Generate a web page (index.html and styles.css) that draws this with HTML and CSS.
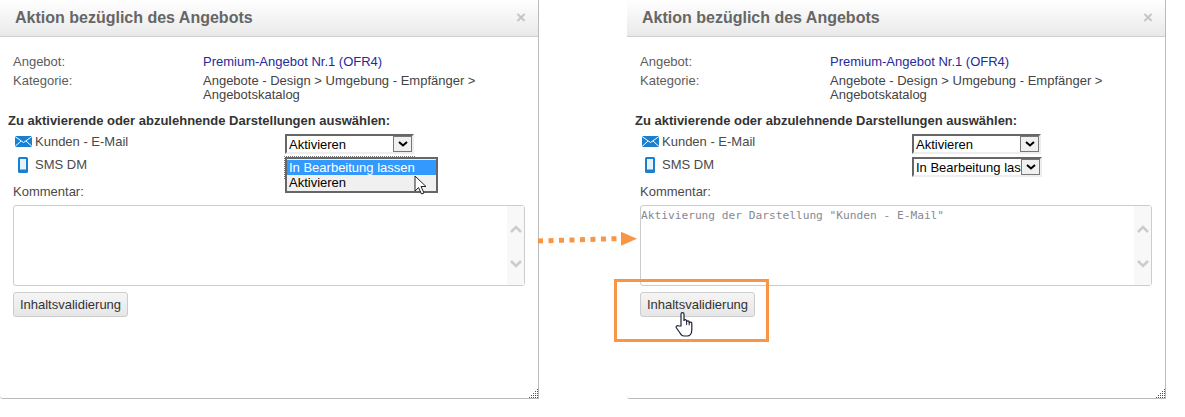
FILE: index.html
```
<!DOCTYPE html>
<html lang="de">
<head>
<meta charset="utf-8">
<title>Aktion bezüglich des Angebots</title>
<link rel="stylesheet" href="styles.css">
</head>
<body>
<main class="stage">
  <section class="dialog dialog-left">
    <header class="dialog-head"><h1>Aktion bezüglich des Angebots</h1><span class="close">×</span></header>
    <div class="dialog-body">
      <dl class="meta">
        <dt>Angebot:</dt><dd class="link">Premium-Angebot Nr.1 (OFR4)</dd>
        <dt>Kategorie:</dt><dd>Angebote - Design &gt; Umgebung - Empfänger &gt;<br>Angebotskatalog</dd>
      </dl>
      <h2>Zu aktivierende oder abzulehnende Darstellungen auswählen:</h2>
      <div class="reps">
        <div class="rep">
          <span class="rep-name"><svg class="ico" width="17" height="11" viewBox="0 0 17 11"><path fill="#1b7fd0" d="M0 0h17v11H0z"/><path fill="none" stroke="#fff" d="M0 .5l8.500 6 8.500-6M0 10.500l6-5.500M17 10.500l-6-5.500"/></svg>Kunden - E-Mail</span>
          <div class="select"><span class="select-value">Aktivieren</span><span class="select-btn"><svg width="10" height="6" viewBox="0 0 10 6"><path fill="none" stroke="#000" stroke-width="2" d="M1 1l4 3.500L9 1"/></svg></span></div>
        </div>
        <div class="rep">
          <span class="rep-name"><svg class="ico phone" width="10" height="16" viewBox="0 0 10 16"><rect width="10" height="16" rx="1.500" fill="#1b7fd0"/><rect x="2" y="2" width="6" height="10.500" fill="#e8f2fa"/></svg>SMS DM</span>
          <div class="dropdown"><div class="opt opt-on">In Bearbeitung lassen</div><div class="opt">Aktivieren</div></div>
        </div>
      </div>
      <label class="comment-label">Kommentar:</label>
      <div class="textarea"><span class="textarea-text"></span><span class="scroll"><svg width="14" height="80" viewBox="0 0 14 80"><path fill="none" stroke="#ccc" stroke-width="2.500" d="M2 26l5-5 5 5M2 55l5 5 5-5"/></svg></span></div>
      <button class="btn">Inhaltsvalidierung</button>
    </div>
    <svg class="grip" width="9" height="9" viewBox="0 0 9 9"><path fill="#555" d="M8 0h1v1H8zM6 2h1v1H6zM8 2h1v1H8zM4 4h1v1H4zM6 4h1v1H6zM8 4h1v1H8zM2 6h1v1H2zM4 6h1v1H4zM6 6h1v1H6zM8 6h1v1H8zM0 8h1v1H0zM2 8h1v1H2zM4 8h1v1H4zM6 8h1v1H6zM8 8h1v1H8z"/></svg>
    <svg class="cursor-arrow" width="14" height="21" viewBox="0 0 14 21"><path fill="#fff" stroke="#222" d="M1 1v15l3.500-3.500 3 6.500 2.500-1-3-6.500h5z"/></svg>
  </section>

  <section class="dialog dialog-right">
    <header class="dialog-head"><h1>Aktion bezüglich des Angebots</h1><span class="close">×</span></header>
    <div class="dialog-body">
      <dl class="meta">
        <dt>Angebot:</dt><dd class="link">Premium-Angebot Nr.1 (OFR4)</dd>
        <dt>Kategorie:</dt><dd>Angebote - Design &gt; Umgebung - Empfänger &gt;<br>Angebotskatalog</dd>
      </dl>
      <h2>Zu aktivierende oder abzulehnende Darstellungen auswählen:</h2>
      <div class="reps">
        <div class="rep">
          <span class="rep-name"><svg class="ico" width="17" height="11" viewBox="0 0 17 11"><path fill="#1b7fd0" d="M0 0h17v11H0z"/><path fill="none" stroke="#fff" d="M0 .5l8.500 6 8.500-6M0 10.500l6-5.500M17 10.500l-6-5.500"/></svg>Kunden - E-Mail</span>
          <div class="select"><span class="select-value">Aktivieren</span><span class="select-btn"><svg width="10" height="6" viewBox="0 0 10 6"><path fill="none" stroke="#000" stroke-width="2" d="M1 1l4 3.500L9 1"/></svg></span></div>
        </div>
        <div class="rep">
          <span class="rep-name"><svg class="ico phone" width="10" height="16" viewBox="0 0 10 16"><rect width="10" height="16" rx="1.500" fill="#1b7fd0"/><rect x="2" y="2" width="6" height="10.500" fill="#e8f2fa"/></svg>SMS DM</span>
          <div class="select select-wide"><span class="select-value">In Bearbeitung lassen</span><span class="select-btn"><svg width="10" height="6" viewBox="0 0 10 6"><path fill="none" stroke="#000" stroke-width="2" d="M1 1l4 3.500L9 1"/></svg></span></div>
        </div>
      </div>
      <label class="comment-label">Kommentar:</label>
      <div class="textarea"><span class="textarea-text">Aktivierung der Darstellung "Kunden - E-Mail"</span><span class="scroll"><svg width="14" height="80" viewBox="0 0 14 80"><path fill="none" stroke="#ccc" stroke-width="2.500" d="M2 26l5-5 5 5M2 55l5 5 5-5"/></svg></span></div>
      <button class="btn">Inhaltsvalidierung</button>
    </div>
    <svg class="grip" width="9" height="9" viewBox="0 0 9 9"><path fill="#555" d="M8 0h1v1H8zM6 2h1v1H6zM8 2h1v1H8zM4 4h1v1H4zM6 4h1v1H6zM8 4h1v1H8zM2 6h1v1H2zM4 6h1v1H4zM6 6h1v1H6zM8 6h1v1H8zM0 8h1v1H0zM2 8h1v1H2zM4 8h1v1H4zM6 8h1v1H6zM8 8h1v1H8z"/></svg>
    <div class="highlight"></div>
    <svg class="cursor-hand" width="20" height="25" viewBox="0 0 20 25"><path fill="#fff" stroke="#1c2333" stroke-width="1.200" d="M6 14V2.200a1.500 1.500 0 0 1 3 0V9a1.300 1.300 0 0 1 2.600 0v1a1.300 1.300 0 0 1 2.600 .3v1a1.300 1.300 0 0 1 2.600 .3V18c0 3.500-2 6-4.500 6H9c-2 0-3-1-4-3l-3.500-5c-1-1.500 .5-3 2-2z"/><path fill="none" stroke="#1c2333" d="M11.600 9v4M14.200 10.300v3"/></svg>
  </section>

  <svg class="arrow" width="100" height="17" viewBox="0 0 100 17"><path fill="none" stroke="#f79646" stroke-width="5" stroke-dasharray="5 5.500" d="M0 11L83 8.500"/><path fill="#f79646" d="M83 1.700l16 7-16 7z"/></svg>
</main>
</body>
</html>
```
FILE: styles.css
```
* { box-sizing: border-box; }
html, body { margin: 0; padding: 0; background: #fff; }
body { font-family: "Liberation Sans", Arial, sans-serif; font-size: 13px; color: #4a4a4a; overflow: hidden; }
.stage { position: relative; display: flex; gap: 88px; width: 1185px; height: 417px; }
.dialog { position: relative; flex: none; width: 539px; height: 399px; border-right: 1px solid #bbb; border-bottom: 1px solid #bbb; border-bottom-left-radius: 3px; }
.dialog-head { height: 37px; display: flex; align-items: center; justify-content: space-between; padding: 0 12px 0 15px; background: linear-gradient(#ffffff, #e9e9e9); border-bottom: 1px solid #cfcfcf; }
h1 { margin: 0; font-size: 16px; font-weight: bold; color: #666; }
.close { font-size: 17px; font-weight: bold; color: #c4c4c4; }
.dialog-body { padding: 18px 13px 0; }
.meta { display: grid; grid-template-columns: 190px 1fr; margin: 0; line-height: 14px; }
.meta dt { color: #5d5d5d; }
.meta dd { margin: 0; color: #444; width: 300px; }
.meta dd.link { color: #1f2a9c; margin-bottom: 5px; }
h2 { margin: 11px 0 0 -5px; font-size: 13px; font-weight: bold; color: #333; line-height: 15px; }
.reps { padding: 6px 0 0 2px; }
.rep { display: flex; position: relative; height: 23px; }
.rep-name { display: flex; align-items: flex-start; width: 270px; line-height: 15px; color: #4a4a4a; }
.ico { flex: none; margin: 2px 3px 0 0; }
.phone { margin: 0 7px 0 3px; }
.select { display: flex; width: 129px; height: 20px; border: 2px solid; border-color: #666 #eee #eee #666; background: #fff; color: #000; }
.select-wide { width: 130px; }
.select-value { flex: 1; overflow: hidden; white-space: nowrap; padding: 1px 0 0 2px; line-height: 15px; }
.select-btn { flex: none; width: 19px; height: 16px; display: flex; align-items: center; justify-content: center; background: #f0f0f0; border: 1px solid #777; }
.dropdown { width: 153px; height: 36px; border: 2px solid #666; background: #f0f0f0; color: #000; position: relative; }
.dropdown::before { content: ""; position: absolute; left: -3px; top: -3px; width: 130px; height: 22px; border-top: 1px dotted #777; border-left: 1px dotted #777; }
.opt { height: 15px; line-height: 15px; padding-left: 2px; }
.opt-on { background: #3399ff; color: #fff; margin-top: 1px; }
.comment-label { display: block; margin-top: 4px; line-height: 15px; color: #4a4a4a; }
.textarea { position: relative; width: 512px; height: 81px; margin-top: 6px; border: 1px solid #ccc; border-radius: 3px; background: #fff; font-family: "DejaVu Sans Mono", monospace; font-size: 11.2px; color: #858a94; }
.textarea-text { position: absolute; left: 0; top: 3px; }
.scroll { position: absolute; right: 0; top: 0; bottom: 0; width: 17px; background: #f8f8f8; display: flex; justify-content: center; }
.btn { display: block; width: 115px; height: 25px; margin-top: 6px; padding: 0; border: 1px solid #ccc; border-radius: 3px; background: linear-gradient(#f5f5f5, #e6e6e6); font: 13px "Liberation Sans", Arial, sans-serif; color: #333; }
.grip { position: absolute; right: 0; bottom: 0; }
.cursor-arrow { position: absolute; left: 414px; top: 175px; }
.highlight { position: absolute; left: -13px; top: 279px; width: 155px; height: 63px; border: 3px solid #f79646; }
.cursor-hand { position: absolute; left: 48px; top: 312px; }
.arrow { position: absolute; left: 538px; top: 230px; }
```
